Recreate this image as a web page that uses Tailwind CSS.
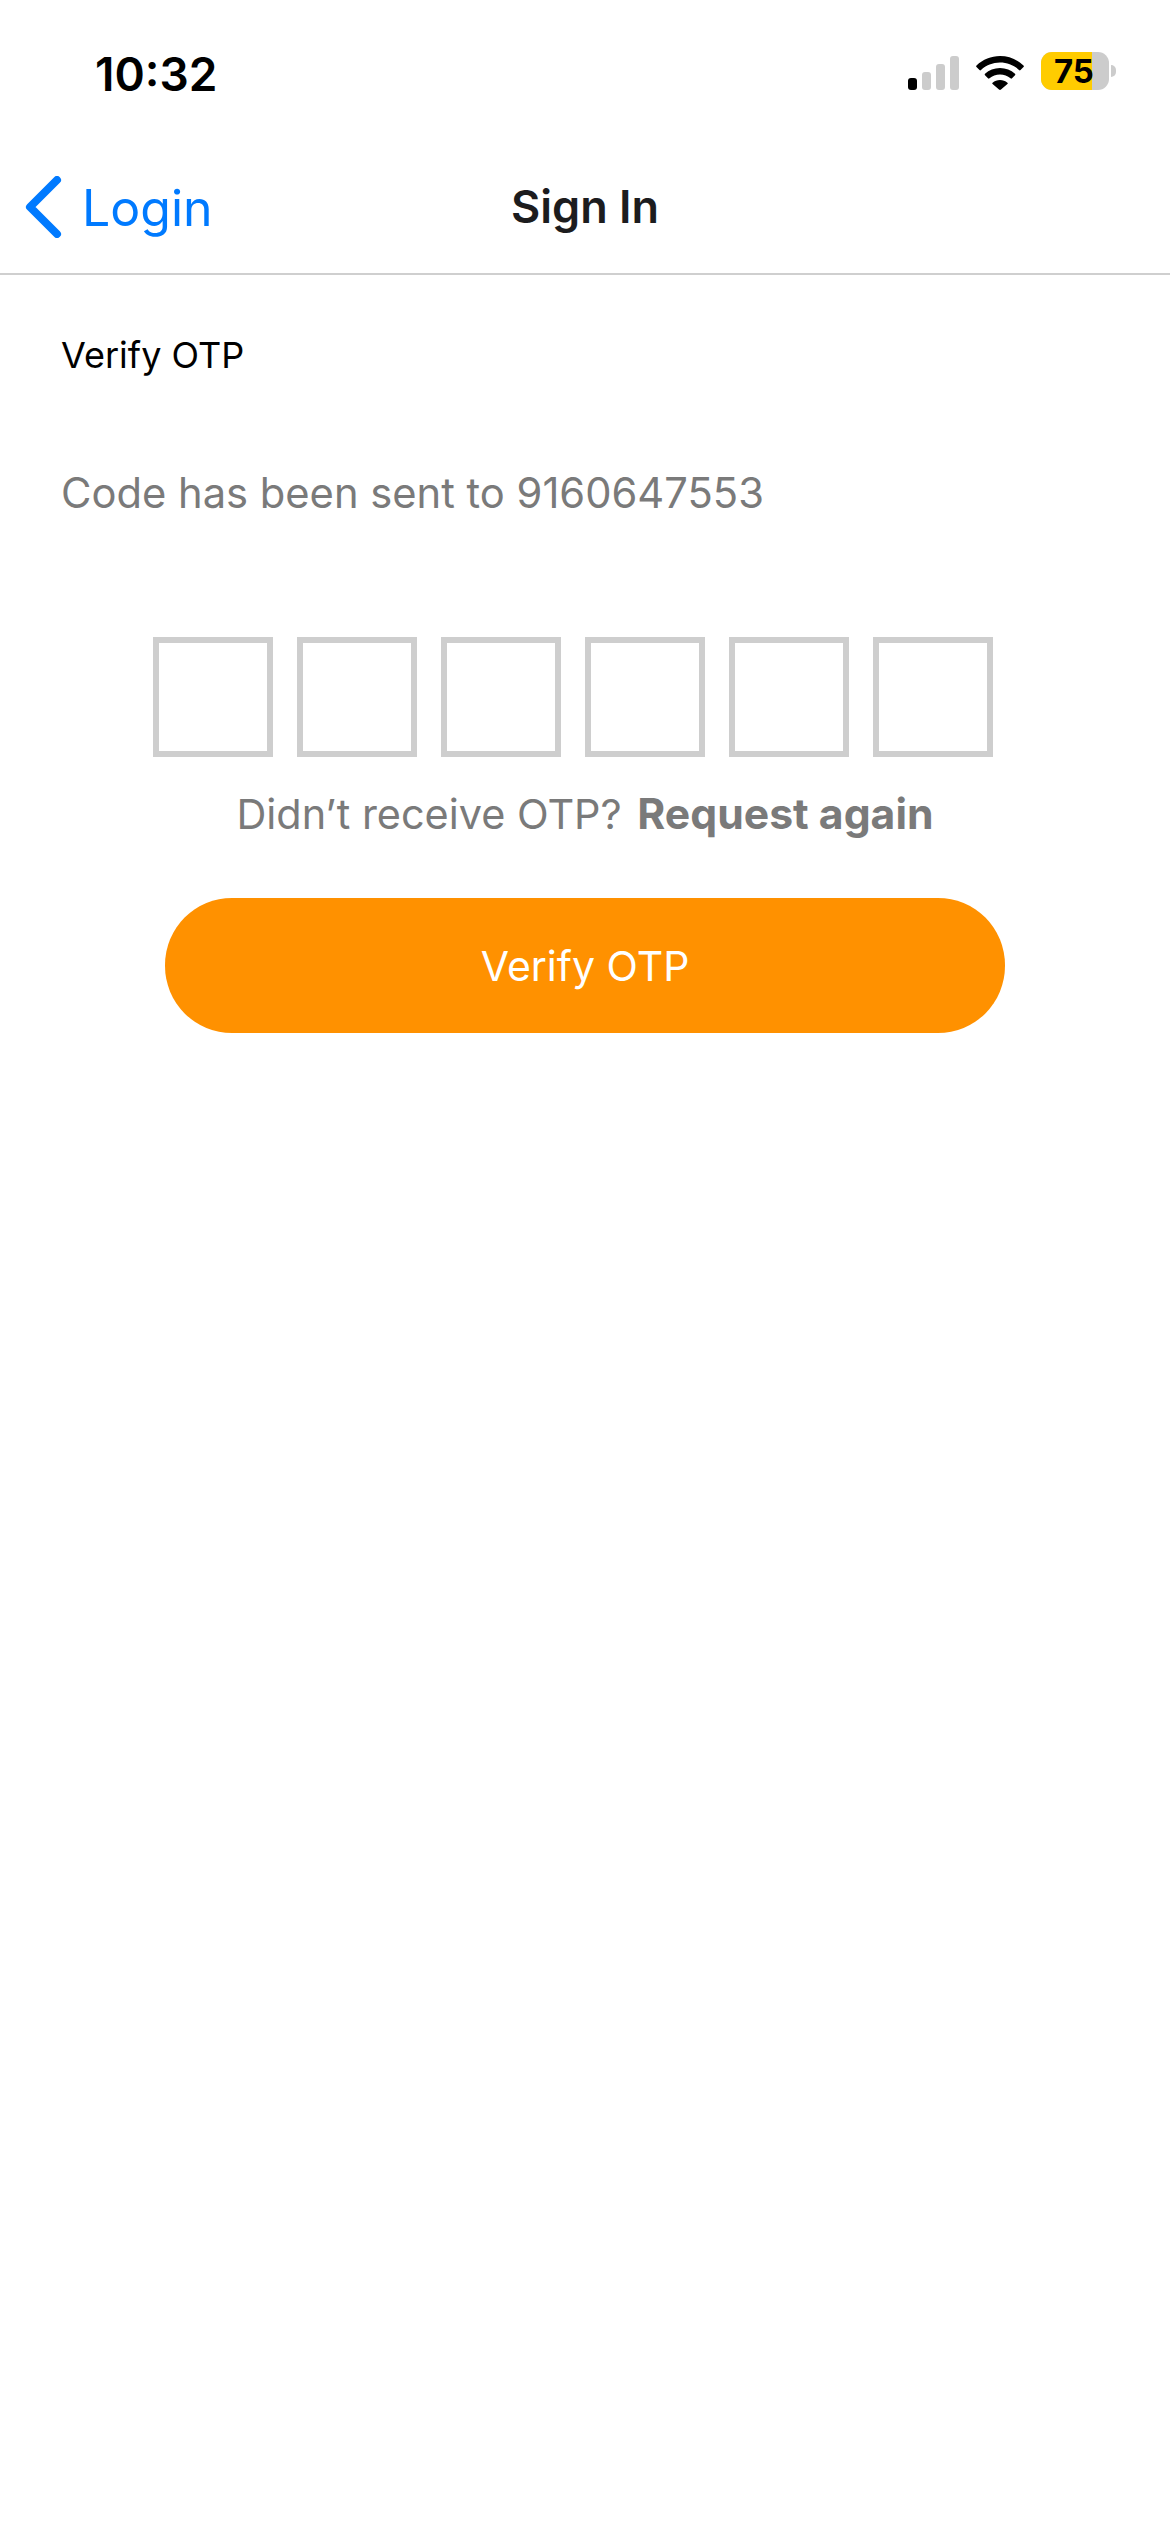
<!DOCTYPE html>
<html lang="en">
<head>
<meta charset="utf-8">
<title>Sign In</title>
<script src="https://cdn.jsdelivr.net/npm/@tailwindcss/browser@4"></script>
</head>
<body class="bg-white font-['Inter',sans-serif] w-[1170px] h-[2532px] overflow-hidden">

  <!-- status bar -->
  <div class="h-[150px] flex items-start justify-between pt-[50px] pl-[95px] pr-[54px]">
    <span class="text-[46px] leading-[48px] font-semibold text-black">10:32</span>
    <div class="flex items-center gap-[17px] pt-[2px]">
      <svg width="51" height="34" viewBox="0 0 51 34" class="mt-[3px]">
        <rect x="0" y="22" width="9" height="12" rx="3" fill="#000"/>
        <rect x="14" y="16" width="9" height="18" rx="3" fill="#ccc"/>
        <rect x="28" y="8" width="9" height="26" rx="3" fill="#ccc"/>
        <rect x="42" y="0" width="9" height="34" rx="3" fill="#ccc"/>
      </svg>
      <svg width="48" height="34" viewBox="0 0 48 34" class="mt-[3px]">
        <path d="M24 0C15 0 7 3.4 0.5 9.5c-.5.5-.5 1 0 1.500L3.500 14c.5.5 1 .5 1.500 0C10 9.300 16.700 6.500 24 6.500S38 9.300 43 14c.5.5 1 .5 1.500 0l3-3c.5-.5.5-1 0-1.500C41 3.400 33 0 24 0Z" fill="#000"/>
        <path d="M24 12c-5.800 0-11 2.200-15 5.800-.5.5-.5 1 0 1.500l3 3c.5.5 1 .5 1.500 0 2.800-2.400 6.500-3.900 10.500-3.900s7.700 1.500 10.500 3.900c.5.5 1 .5 1.500 0l3-3c.5-.5.5-1 0-1.500C35 14.200 29.800 12 24 12Z" fill="#000"/>
        <path d="M24 24c-2.800 0-5.400 1-7.400 2.700-.5.4-.5 1 0 1.400l6.400 5.500c.6.500 1.400.5 2 0l6.400-5.500c.5-.4.5-1 0-1.400C29.400 25 26.800 24 24 24Z" fill="#000"/>
      </svg>
      <div class="flex items-center gap-[2px]">
        <div class="relative w-[68px] h-[38px] rounded-[11px] overflow-hidden bg-[#cccccc]">
          <div class="h-full w-[51px] bg-[#ffcc00]"></div>
          <span class="absolute left-[13px] top-0 text-[33px] leading-[38px] font-bold text-black">75</span>
        </div>
        <div class="w-[5px] h-[12px] rounded-r-full bg-[#cccccc]"></div>
      </div>
    </div>
  </div>

  <!-- nav -->
  <div class="relative h-[125px] pb-[10px] flex items-center justify-center border-b-2 border-[#cfcfcf]">
    <div class="absolute left-[25px] top-[26px] flex items-center gap-[19px]">
      <svg width="38" height="62" viewBox="0 0 38 62" fill="none">
        <path d="M32 4 L5 31 L32 58" stroke="#007aff" stroke-width="8" stroke-linecap="round" stroke-linejoin="round"/>
      </svg>
      <span class="text-[50px] leading-[62px] text-[#007aff] translate-y-[1px]">Login</span>
    </div>
    <span class="text-[45px] leading-[54px] font-semibold text-[#1c1c1e]">Sign In</span>
  </div>

  <!-- content -->
  <div class="px-[61px]">
    <p class="mt-[58px] text-[36px] leading-[44px] text-black">Verify OTP</p>
    <p class="mt-[91px] text-[41.7px] leading-[50px] text-[#7a7a7a]">Code has been sent to 9160647553</p>
  </div>

  <div class="mt-[119px] ml-[153px] flex gap-[24px]">
    <div class="w-[120px] h-[120px] border-[6px] border-[#cecece]"></div>
    <div class="w-[120px] h-[120px] border-[6px] border-[#cecece]"></div>
    <div class="w-[120px] h-[120px] border-[6px] border-[#cecece]"></div>
    <div class="w-[120px] h-[120px] border-[6px] border-[#cecece]"></div>
    <div class="w-[120px] h-[120px] border-[6px] border-[#cecece]"></div>
    <div class="w-[120px] h-[120px] border-[6px] border-[#cecece]"></div>
  </div>

  <p class="mt-[32px] text-center text-[41.4px] leading-[50px] text-[#7a7a7a]">Didn’t receive OTP? <span class="font-bold text-[42.7px] ml-[4px]">Request again</span></p>

  <div class="mt-[59px] mx-auto w-[840px] h-[135px] rounded-[67px] bg-[#ff9100] flex items-center justify-center">
    <span class="text-[41px] leading-[50px] text-white">Verify OTP</span>
  </div>
</body>
</html>
